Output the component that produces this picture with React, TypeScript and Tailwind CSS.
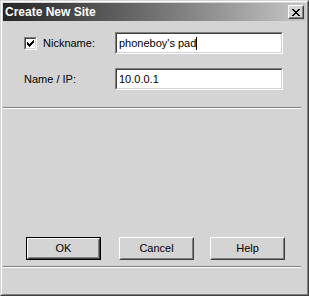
import React from "react";

const X_PATTERN = [
  "XX....XX",
  ".XX..XX.",
  "..XXXX..",
  "...XX...",
  "..XXXX..",
  ".XX..XX.",
  "XX....XX",
];

const CHECK_PATTERN = [
  "......X",
  ".....XX",
  "X...XXX",
  "XX.XXX.",
  "XXXXX..",
  ".XXX...",
  "..X....",
];

function PixelGlyph({ pattern }: { pattern: string[] }) {
  const w = pattern[0].length;
  const h = pattern.length;
  const rects: React.ReactElement[] = [];
  pattern.forEach((row, y) =>
    row.split("").forEach((c, x) => {
      if (c === "X") rects.push(<rect key={`${x}-${y}`} x={x} y={y} width={1} height={1} fill="#000" />);
    })
  );
  return (
    <svg width={w} height={h} viewBox={`0 0 ${w} ${h}`} shapeRendering="crispEdges">
      {rects}
    </svg>
  );
}

function Sunken({ className, children }: { className?: string; children?: React.ReactNode }) {
  return (
    <div className={`border border-t-[#808080] border-l-[#808080] border-r-white border-b-white ${className ?? ""}`}>
      <div className="w-full h-full border border-t-[#404040] border-l-[#404040] border-r-[#d4d4d4] border-b-[#d4d4d4] bg-white">
        {children}
      </div>
    </div>
  );
}

function Button({ label, isDefault }: { label: string; isDefault?: boolean }) {
  const inner = (
    <div className="w-full h-full border border-t-white border-l-white border-r-[#404040] border-b-[#404040]">
      <div className="w-full h-full border border-t-[#d4d4d4] border-l-[#d4d4d4] border-r-[#808080] border-b-[#808080] flex items-center justify-center text-[11px] text-black">
        {label}
      </div>
    </div>
  );
  return (
    <div className={`w-[75px] h-[23px] ${isDefault ? "border border-black" : ""}`}>{inner}</div>
  );
}

function Separator() {
  return <div className="w-[298px] border-t border-t-[#808080] border-b border-b-white" />;
}

export default function App() {
  return (
    <div
      className="w-[309px] h-[296px] border border-t-[#d4d4d4] border-l-[#d4d4d4] border-r-[#404040] border-b-[#404040] bg-[#d4d4d4]"
      style={{ fontFamily: '"Liberation Sans", Arial, sans-serif' }}
    >
      <div className="w-full h-full border border-t-white border-l-white border-r-[#808080] border-b-[#808080] p-px flex flex-col">
        {/* Title bar */}
        <div className="h-[18px] flex items-center justify-between bg-gradient-to-r from-[#262626] to-[#c8c8c8] pl-[2px] pr-[2px]">
          <span className="text-white font-bold text-[12px] leading-none">Create New Site</span>
          <div className="w-[16px] h-[14px] border border-t-white border-l-white border-r-[#404040] border-b-[#404040] bg-[#d4d4d4]">
            <div className="w-full h-full border border-t-[#d4d4d4] border-l-[#d4d4d4] border-r-[#808080] border-b-[#808080] flex items-center justify-center">
              <PixelGlyph pattern={X_PATTERN} />
            </div>
          </div>
        </div>

        {/* Rows */}
        <div className="mt-[11px] flex items-center h-[22px]">
          <div className="ml-[21px] w-[13px] h-[13px]">
            <Sunken className="w-[13px] h-[13px]">
              <div className="w-full h-full flex items-center justify-center">
                <PixelGlyph pattern={CHECK_PATTERN} />
              </div>
            </Sunken>
          </div>
          <span className="ml-[6px] text-[11px] text-black w-[72px]">Nickname:</span>
          <Sunken className="w-[168px] h-[22px]">
            <div className="h-full flex items-center pl-[2px] text-[11px] text-black">
              <span>phoneboy's pad</span>
              <span className="w-px h-[13px] bg-black" />
            </div>
          </Sunken>
        </div>

        <div className="mt-[14px] flex items-center h-[22px]">
          <span className="ml-[21px] text-[11px] text-black w-[91px]">Name / IP:</span>
          <Sunken className="w-[168px] h-[22px]">
            <div className="h-full flex items-center pl-[2px] text-[11px] text-black">10.0.0.1</div>
          </Sunken>
        </div>

        <div className="mt-[17px]">
          <Separator />
        </div>

        <div className="mt-[128px] flex items-center pl-[23px]">
          <Button label="OK" isDefault />
          <div className="ml-[18px]">
            <Button label="Cancel" />
          </div>
          <div className="ml-[16px]">
            <Button label="Help" />
          </div>
        </div>

        <div className="mt-[6px]">
          <Separator />
        </div>
      </div>
    </div>
  );
}
